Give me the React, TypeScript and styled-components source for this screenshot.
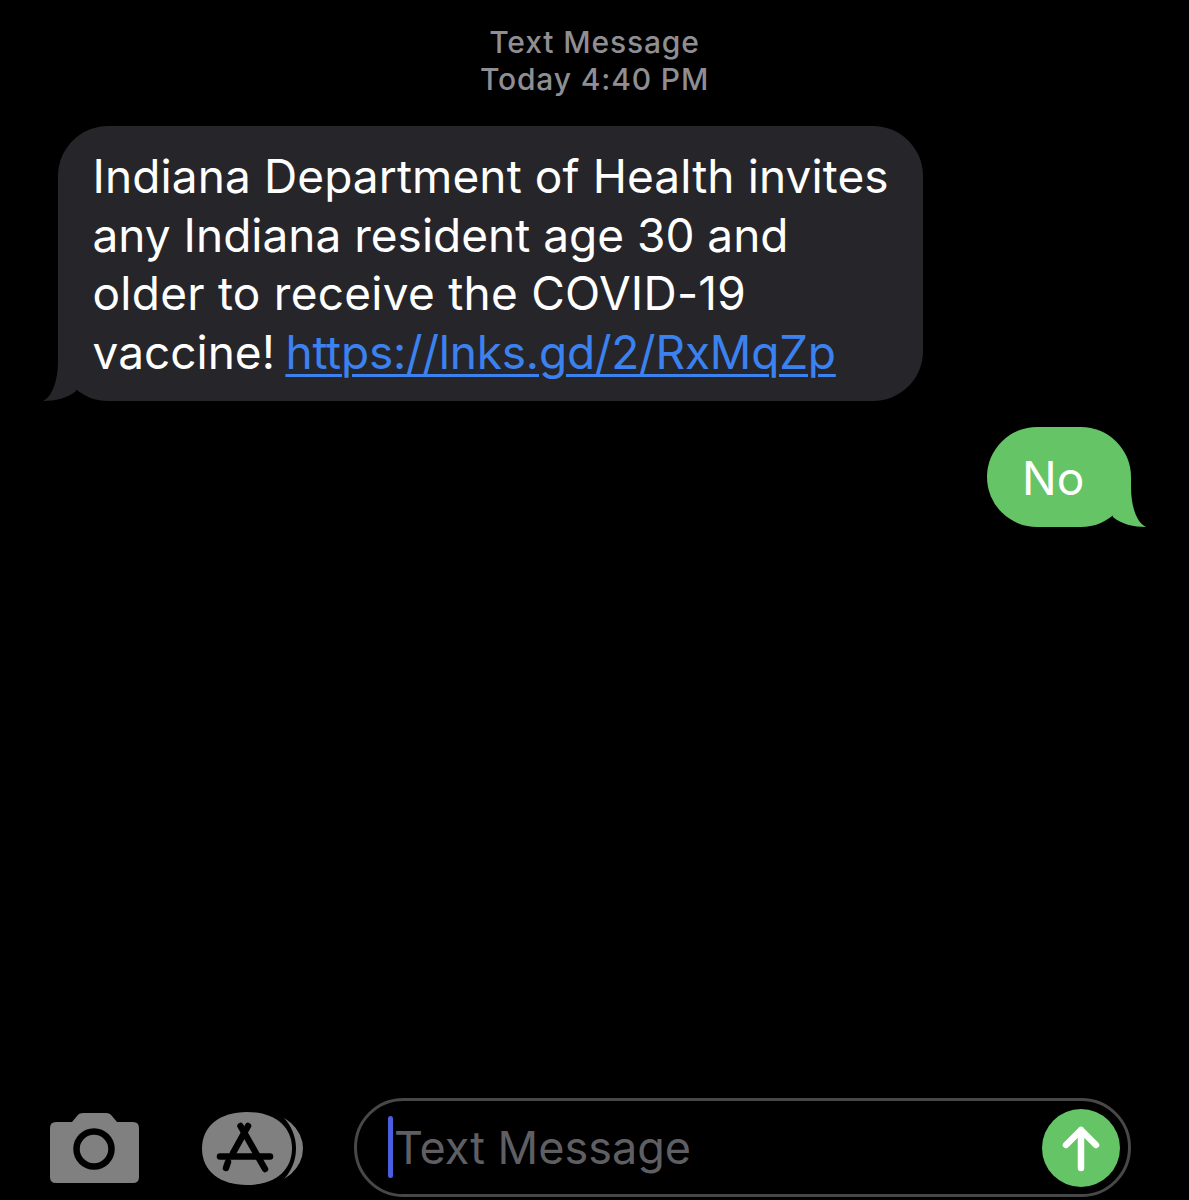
import React from "react";
import styled, { createGlobalStyle } from "styled-components";

const Global = createGlobalStyle`
  html, body { margin: 0; padding: 0; background: #000; }
  #root { width: 100%; }
`;
const FONT = `Inter, "Liberation Sans", sans-serif`;

const Page = styled.div`
  height: 1200px;
  background: #000;
  display: flex;
  flex-direction: column;
  font-family: ${FONT};
  overflow: hidden;
`;
const Stamp = styled.header`
  padding-top: 24px;
  text-align: center;
  color: #8e8e93;
  font-size: 30px;
  line-height: 37px;
  font-weight: 500;
  letter-spacing: 0.85px;
`;
const Thread = styled.section`
  display: flex;
  flex-direction: column;
  padding: 28px 58px 0;
  gap: 26px;
`;
const Bubble = styled.div<{ $sent?: boolean }>`
  position: relative;
  box-sizing: border-box;
  align-self: ${(p) => (p.$sent ? "flex-end" : "flex-start")};
  width: ${(p) => (p.$sent ? "144px" : "865px")};
  height: ${(p) => (p.$sent ? "100px" : "275px")};
  padding: ${(p) => (p.$sent ? "22px 35px" : "21px 34.5px")};
  border-radius: 50px;
  background: ${(p) => (p.$sent ? "#65c466" : "#26262a")};
  color: #fff;
  font-size: 46px;
  line-height: 58.5px;
  white-space: pre;
`;
const Line = styled.div<{ $track?: number }>`
  display: flex;
  letter-spacing: ${(p) => p.$track ?? 0}px;
`;
const Lead = styled.span`
  margin-right: 10.5px;
`;
const Tail = styled.svg<{ $sent?: boolean }>`
  position: absolute;
  bottom: 0;
  width: 40px;
  height: 50px;
  ${(p) => (p.$sent ? "right: -15px;" : "left: -15px; transform: scaleX(-1);")}
`;
const Link = styled.a`
  color: #3b82f0;
  letter-spacing: -0.2px;
  text-decoration: underline;
  text-decoration-thickness: 3px;
  text-underline-offset: 5px;
`;
const Composer = styled.footer`
  margin-top: auto;
  display: flex;
  align-items: center;
  padding: 0 58px 3px 50px;
  height: 99px;
`;
const CameraIcon = styled.svg`
  width: 89px;
  height: 70px;
  flex: none;
`;
const StoreIcon = styled.svg`
  width: 101px;
  height: 73px;
  flex: none;
  margin: 1px 0 0 63px;
`;
const Field = styled.div`
  position: relative;
  box-sizing: border-box;
  flex: 1;
  height: 99px;
  margin-left: 51px;
  padding-left: 37px;
  border: 3px solid #48484a;
  border-radius: 50px;
  display: flex;
  align-items: center;
  color: #5f5f63;
  font-size: 45px;
`;
const Caret = styled.span`
  position: absolute;
  left: 31px;
  top: 15px;
  width: 5px;
  height: 62px;
  border-radius: 3px;
  background: #4a5fe0;
`;
const Send = styled.svg`
  position: absolute;
  right: 8px;
  top: 8px;
  width: 78px;
  height: 78px;
`;

const TailShape = ({ sent }: { sent?: boolean }) => (
  <Tail $sent={sent} viewBox="0 0 40 50">
    <path d="M5 0 L25 0 L25 10 C25 30 31 46 40 50 C28 50 15 47 7 40 L5 30 Z" fill={sent ? "#65c466" : "#26262a"} />
  </Tail>
);

export default function App() {
  return (
    <Page>
      <Global />
      <Stamp>
        Text Message
        <br />
        Today 4:40 PM
      </Stamp>
      <Thread>
        <Bubble>
          <Line $track={0.1}>Indiana Department of Health invites</Line>
          <Line>any Indiana resident age 30 and</Line>
          <Line $track={0.25}>older to receive the COVID-19</Line>
          <Line>
            <Lead>vaccine!</Lead>
            <Link href="#">https://lnks.gd/2/RxMqZp</Link>
          </Line>
          <TailShape />
        </Bubble>
        <Bubble $sent>
          No
          <TailShape sent />
        </Bubble>
      </Thread>
      <Composer>
        <CameraIcon viewBox="0 0 89 70">
          <path
            d="M6 9H22L27 3Q29 0 33 0H56Q60 0 62 3L67 9H83Q89 9 89 15V64Q89 70 83 70H6Q0 70 0 64V15Q0 9 6 9Z"
            fill="#808080"
          />
          <circle cx="44" cy="36" r="17.5" fill="none" stroke="#000" strokeWidth="6.5" />
        </CameraIcon>
        <StoreIcon viewBox="0 0 101 73">
          <ellipse cx="60" cy="36.5" rx="41" ry="36" fill="#808080" />
          <ellipse cx="47" cy="36.5" rx="47" ry="46" fill="#000" />
          <path
            d="M45 0C72 0 90 14 90 36.5C90 59 72 73 45 73C18 73 0 59 0 36.5C0 14 18 0 45 0Z"
            fill="#808080"
          />
          <g stroke="#000" strokeWidth="6.5" strokeLinecap="round" fill="none">
            <path d="M46 14L31 41" />
            <path d="M26 50L24 56" />
            <path d="M38.5 14L63 57" />
            <path d="M18 44.5H68" />
          </g>
        </StoreIcon>
        <Field>
          <Caret />
          Text Message
          <Send viewBox="0 0 78 78">
            <circle cx="39" cy="39" r="39" fill="#65c466" />
            <path
              d="M39 59V21M24 36L39 21L54 36"
              fill="none"
              stroke="#fff"
              strokeWidth="6.5"
              strokeLinecap="round"
              strokeLinejoin="round"
            />
          </Send>
        </Field>
      </Composer>
    </Page>
  );
}
